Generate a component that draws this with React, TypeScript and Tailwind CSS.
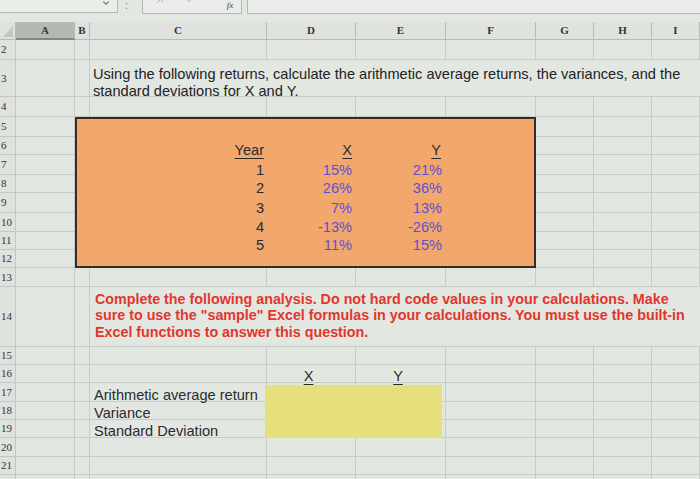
import { ChevronDown, X as XIcon, Check } from "lucide-react";

const COLS = ["A", "B", "C", "D", "E", "F", "G", "H", "I"];
const ROWS = Array.from({ length: 20 }, (_, i) => i + 2);

const years = [
  ["1", "15%", "21%"],
  ["2", "26%", "36%"],
  ["3", "7%", "13%"],
  ["4", "-13%", "-26%"],
  ["5", "11%", "15%"],
];

const FormulaBar = () => {
  return (
    <div className="flex h-[22px] items-start">
      <div className="flex h-[13px] w-[118px] items-start justify-end border-b border-r border-[#b3b8b2] bg-[#eaede9] pr-[6px]">
        <ChevronDown size={10} strokeWidth={2.5} className="-mt-[2px] text-[#555]" />
      </div>
      <span className="ml-[7px] mt-[1px] text-[10px] leading-none text-[#777]">:</span>
      <div className="ml-[14px] flex h-[14px] w-[100px] items-start border border-t-0 border-[#b3b8b2] bg-[#eaede9]">
        <XIcon size={11} strokeWidth={1.5} className="ml-[12px] -mt-[6px] text-[#999]" />
        <Check size={11} strokeWidth={1.5} className="ml-[19px] -mt-[6px] text-[#999]" />
        <span className="ml-[31px] mt-[1px] font-['Liberation_Serif',serif] text-[9px] italic leading-none text-[#444]">
          fx
        </span>
      </div>
      <div className="ml-[5px] h-[14px] flex-1 border-b border-l border-[#b3b8b2] bg-[#eaede9]" />
    </div>
  );
};

const SheetGrid = () => {
  return (
    <div className="col-start-1 row-start-1 grid grid-cols-[16px_59px_15px_177px_89px_90px_90px_58px_58px_48px] grid-rows-[18px_20px_37px_20px_20px_18px_20px_18px_20px_19px_18px_18px_19px_60px_18px_18px_19px_18px_18px_19px_18px_20px] font-['Liberation_Serif',serif]">
      {/* header row */}
      <div className="flex items-end justify-end border-b border-r border-[#b7bcb6] bg-[#dfe2de] pb-[2px] pr-[2px]">
        <svg width="10" height="11" viewBox="0 0 10 11">
          <polygon points="10,0 10,11 0,11" fill="#c4c8c3" />
        </svg>
      </div>
      {COLS.map((c) => (
        <div
          key={c}
          className={
            c === "A"
              ? "flex items-center justify-center border-b-2 border-r border-b-[#7f8a7f] border-r-[#b7bcb6] bg-[#b4b9b3] text-[11px] font-bold text-[#2f3a2f]"
              : "flex items-center justify-center border-b border-r border-[#b7bcb6] bg-[#dfe2de] text-[11px] font-bold text-[#333]"
          }
        >
          {c}
        </div>
      ))}
      {ROWS.map((r) => (
        <div key={r} className="contents">
          <div className="flex items-center border-b border-r border-[#c2c8c1] bg-[#dfe3de] pl-[1px] text-[11px] leading-none text-[#333]">
            {r}
          </div>
          {COLS.map((c) => (
            <div key={c} className="border-b border-r border-[#c6ccc5]" />
          ))}
        </div>
      ))}
      <div className="border-r border-[#c2c8c1] bg-[#dfe3de]" />
      {COLS.map((c) => (
        <div key={c} className="border-r border-[#c6ccc5]" />
      ))}
    </div>
  );
};

const Content = () => {
  return (
    <div className="col-start-1 row-start-1 grid grid-cols-[16px_59px_15px_177px_89px_90px_90px_58px_58px_48px] grid-rows-[18px_20px_37px_20px_20px_18px_20px_18px_20px_19px_18px_18px_19px_60px_18px_18px_19px_18px_18px_19px_18px_20px] text-[14.6px]">
      {/* row 3: question */}
      <div className="col-start-4 col-end-11 row-start-3 mb-[1px] flex items-end whitespace-nowrap bg-[#e3e7e2] pl-[3px] leading-[17px] text-[#222]">
        <p className="translate-y-[4px]">
          Using the following returns, calculate the arithmetic average returns, the variances, and the
          <br />
          standard deviations for X and Y.
        </p>
      </div>

      {/* orange data box */}
      <div className="col-start-3 col-end-8 row-start-5 row-end-13 border-2 border-[#3b2a1f] bg-[#f2a76c]" />
      <div className="col-start-4 col-end-7 row-start-6 row-end-12 grid translate-y-[2px] grid-cols-subgrid grid-rows-subgrid leading-[14px]">
        <div className="flex items-end justify-end pr-[3px] text-[#2b2b2b]">
          <span className="underline decoration-1 underline-offset-[3px]">Year</span>
        </div>
        <div className="flex items-end justify-end pr-[4px] text-[#2b2b2b]">
          <span className="underline decoration-1 underline-offset-[3px]">X</span>
        </div>
        <div className="flex items-end justify-end pr-[5px] text-[#2b2b2b]">
          <span className="underline decoration-1 underline-offset-[3px]">Y</span>
        </div>
        {years.map(([y, x, v]) => (
          <div key={y} className="contents">
            <div className="flex items-end justify-end pr-[3px] text-[#2b2b2b]">{y}</div>
            <div className="flex items-end justify-end pr-[4px] text-[#5f4fcf]">{x}</div>
            <div className="flex items-end justify-end pr-[4px] text-[#5f4fcf]">{v}</div>
          </div>
        ))}
      </div>

      {/* row 14: instructions */}
      <div className="col-start-4 col-end-11 row-start-14 mb-[1px] flex items-center whitespace-nowrap bg-[#e3e7e2] pl-[5px] text-[14.3px] font-bold leading-[16.5px] text-[#e2362b]">
        <p className="translate-y-[-1px]">
          Complete the following analysis. Do not hard code values in your calculations. Make
          <br />
          sure to use the "sample" Excel formulas in your calculations. You must use the built-in
          <br />
          Excel functions to answer this question.
        </p>
      </div>

      {/* answer block */}
      <div className="col-start-5 row-start-16 flex items-end justify-center pr-[6px] leading-[14px] text-[#2b2b2b]">
        <span className="underline decoration-1 underline-offset-[3px]">X</span>
      </div>
      <div className="col-start-6 row-start-16 flex items-end justify-center pr-[6px] leading-[14px] text-[#2b2b2b]">
        <span className="underline decoration-1 underline-offset-[3px]">Y</span>
      </div>
      <div className="col-start-4 row-start-17 flex items-end whitespace-nowrap pl-[4px] leading-[14px] text-[#2b2b2b]">
        Arithmetic average return
      </div>
      <div className="col-start-4 row-start-18 flex items-end pl-[4px] leading-[14px] text-[#2b2b2b]">
        Variance
      </div>
      <div className="col-start-4 row-start-19 flex items-end pl-[4px] leading-[14px] text-[#2b2b2b]">
        Standard Deviation
      </div>
      <div className="col-start-5 col-end-7 row-start-17 row-end-20 -ml-[2px] mr-[4px] mt-[2px] bg-[#e6e07c]" />
    </div>
  );
};

export default function App() {
  return (
    <div className="h-[479px] w-[700px] overflow-hidden bg-[#e3e7e2] font-['Liberation_Sans',Arial,sans-serif]">
      <FormulaBar />
      <div className="grid">
        <SheetGrid />
        <Content />
      </div>
    </div>
  );
}
